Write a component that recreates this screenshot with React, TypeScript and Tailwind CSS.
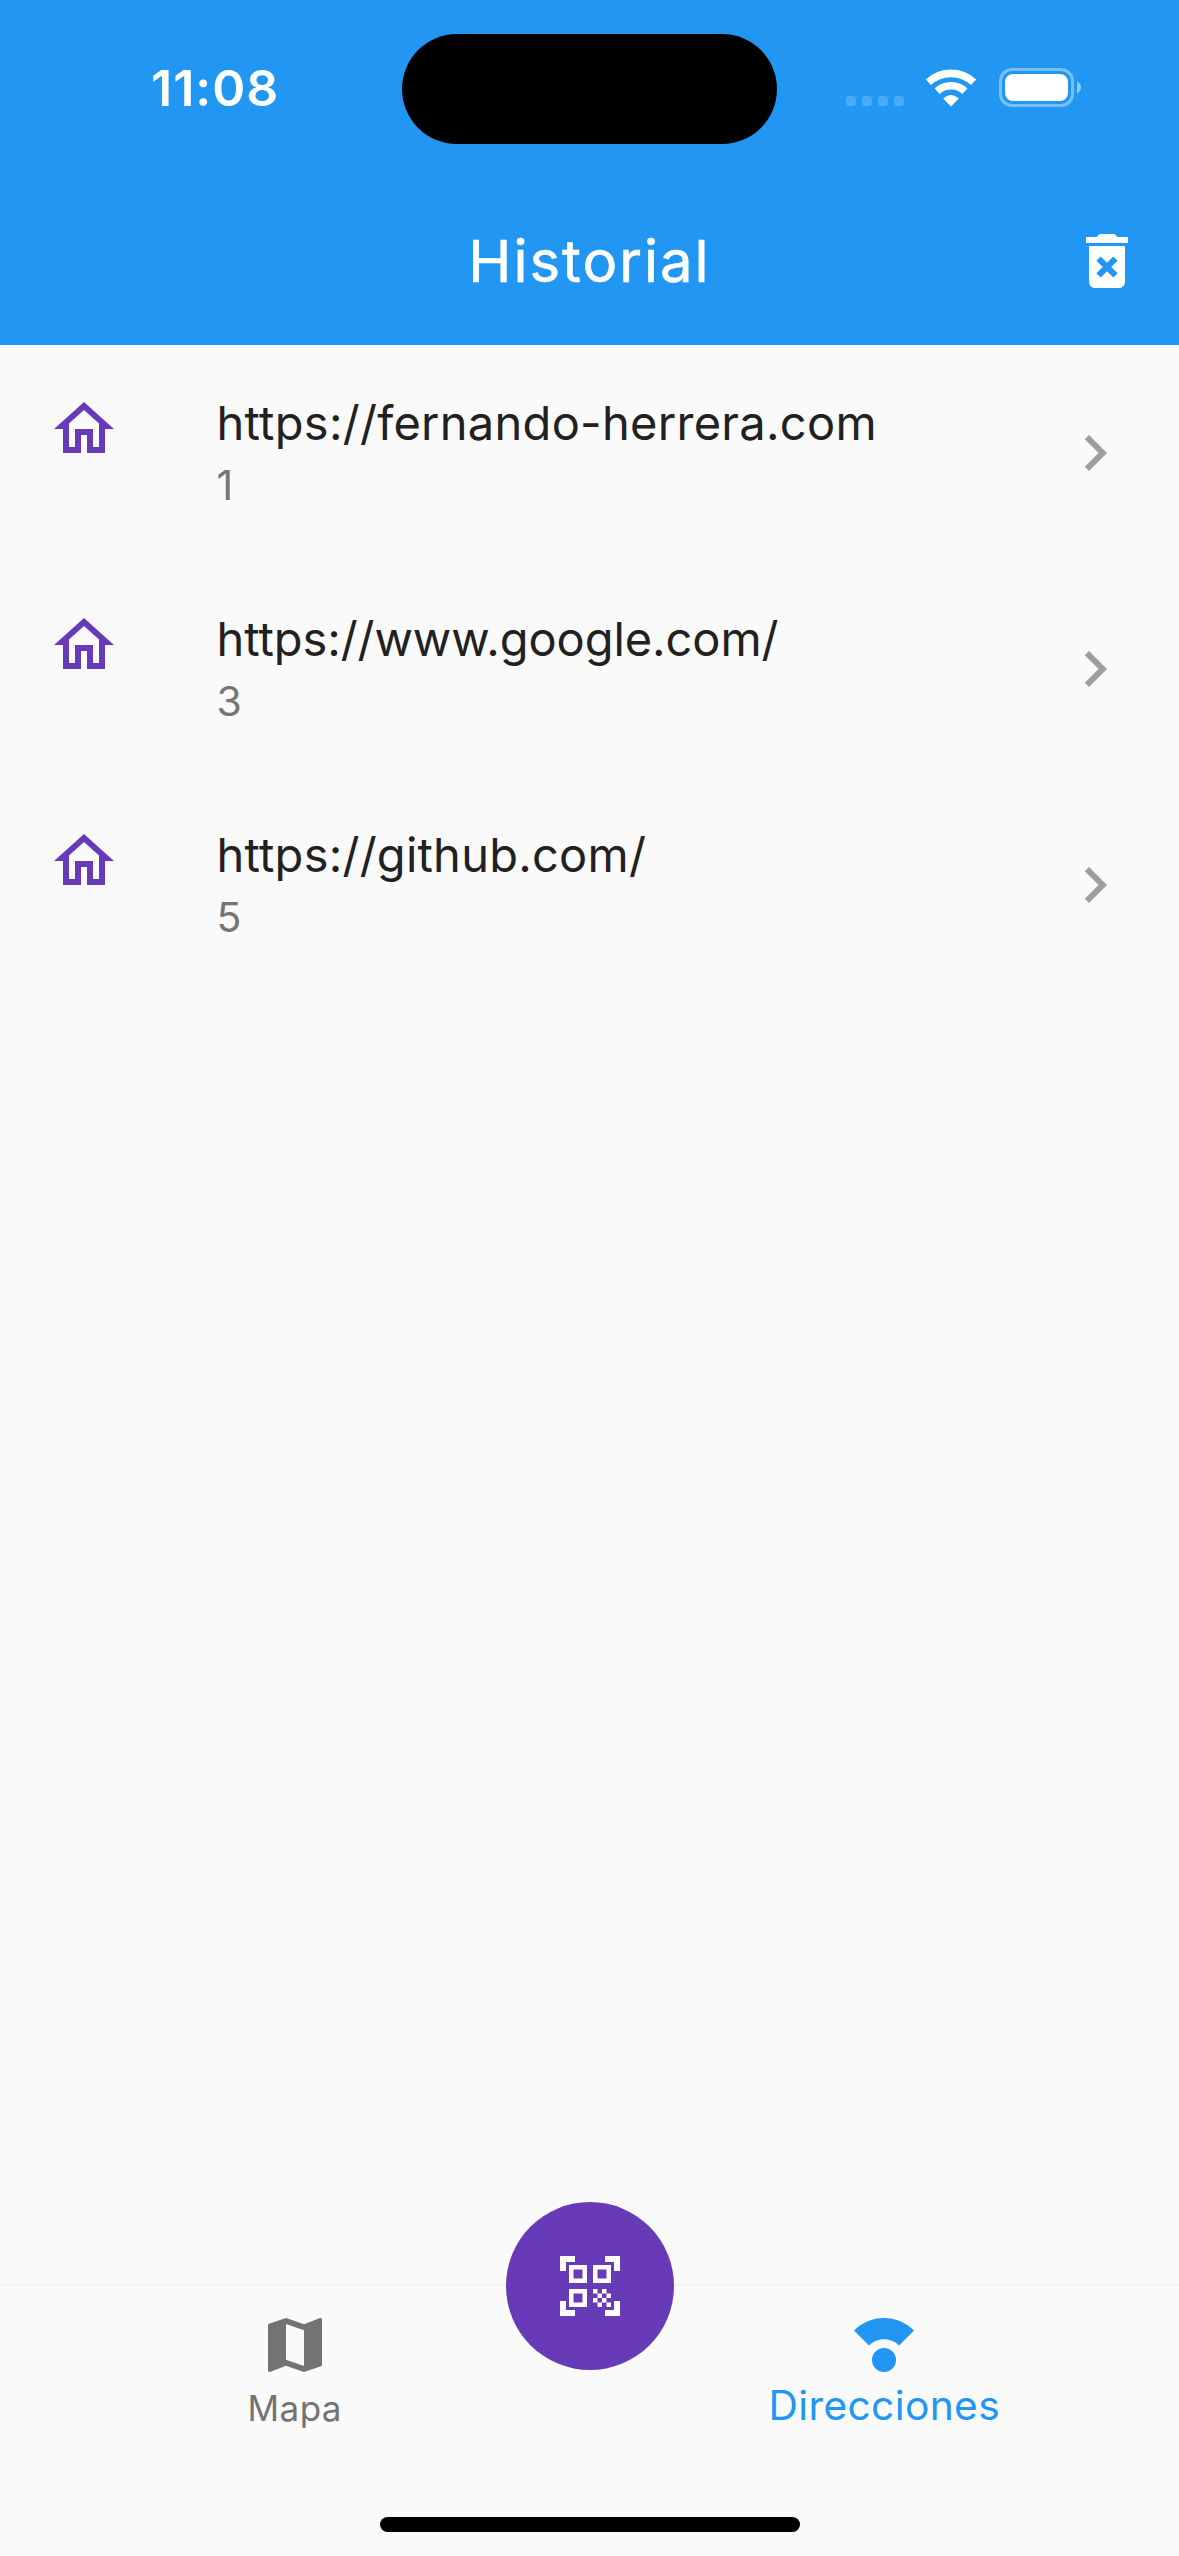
import type { ReactNode } from "react";

const history = [
  { url: "https://fernando-herrera.com", id: 1, tracking: "tracking-[0.28px]" },
  { url: "https://www.google.com/", id: 3, tracking: "tracking-[-0.06px]" },
  { url: "https://github.com/", id: 5, tracking: "tracking-[0.24px]" },
];

function Icon({ d, className }: { d: string; className?: string }) {
  return (
    <svg viewBox="0 0 24 24" fill="currentColor" className={`size-[72px] shrink-0 ${className ?? ""}`}>
      <path d={d} />
    </svg>
  );
}

const paths = {
  trash:
    "M6 19c0 1.1.9 2 2 2h8c1.1 0 2-.9 2-2V7H6v12zm2.46-7.12 1.41-1.41L12 12.59l2.12-2.12 1.41 1.41L13.41 14l2.12 2.12-1.41 1.41L12 15.41l-2.12 2.12-1.41-1.41L10.59 14l-2.13-2.12zM15.5 4l-1-1h-5l-1 1H5v2h14V4z",
  home: "M12 5.69l5 4.5V18h-2v-6H9v6H7v-7.81l5-4.5M12 3L2 12h3v8h6v-6h2v6h6v-8h3L12 3z",
  chevron: "M8.59 16.59 13.17 12 8.59 7.41 10 6l6 6-6 6z",
  scanner:
    "M9.5 6.5v3h-3v-3h3M11 5H5v6h6V5zm-1.5 9.5v3h-3v-3h3M11 13H5v6h6v-6zm6.5-6.5v3h-3v-3h3M19 5h-6v6h6V5zm-6 8h1.5v1.5H13V13zm1.5 1.5H16V16h-1.5v-1.5zM16 13h1.5v1.5H16V13zm-3 3h1.5v1.5H13V16zm1.5 1.5H16V19h-1.5v-1.5zM16 16h1.5v1.5H16V16zm1.5-1.5H19V16h-1.5v-1.5zm0 3H19V19h-1.5v-1.5zM22 7h-2V4h-3V2h5v5zm0 15v-5h-2v3h-3v2h5zM2 22h5v-2H4v-3H2v5zM2 2v5h2V4h3V2H2z",
  map: "M20.5 3l-.16.03L15 5.1 9 3 3.36 4.9c-.21.07-.36.25-.36.48V20.5c0 .28.22.5.5.5l.16-.03L9 18.9l6 2.1 5.64-1.9c.21-.07.36-.25.36-.48V3.5c0-.28-.22-.5-.5-.5zM15 19l-6-2.11V5l6 2.11V19z",
  compass:
    "M12 10.07c1.95 0 3.72.79 5 2.07l5-5C19.44 4.59 15.9 3 12 3S4.56 4.59 2 7.15l5 5c1.28-1.28 3.05-2.08 5-2.08zM12 13a4 4 0 1 0 0 8 4 4 0 0 0 0-8z",
};

function StatusBar() {
  return (
    <div className="flex h-[177px] items-start">
      <div className="w-[402px] pt-[58px] pl-[151px] text-[50px] leading-[60px] font-semibold tracking-[1px]">
        11:08
      </div>
      <div className="mt-[33.5px] h-[110.5px] w-[375px] rounded-full bg-black" />
      <div className="ml-[69px] flex h-[177px] gap-[6px] pt-[96px]">
        {[0, 1, 2, 3].map((n) => (
          <div key={n} className="size-[10px] rounded-[3px] bg-white/20" />
        ))}
      </div>
      {/* Wi-Fi signal */}
      <svg width="52" height="38" viewBox="0 0 52 38" className="mt-[68.5px] ml-[21px]">
        <g fill="none" stroke="#fff">
          <path d="M3.4 13.3A33 33 0 0 1 48.6 13.3" strokeWidth="7.6" />
          <path d="M12.1 22.2A20.5 20.5 0 0 1 39.9 22.2" strokeWidth="7.4" />
        </g>
        <path d="M26 37.6 18.6 30.1Q18.2 29.5 18.8 29Q26 22.8 33.2 29Q33.8 29.5 33.4 30.1Z" fill="#fff" />
      </svg>
      {/* Battery */}
      <svg width="84" height="40" viewBox="0 0 84 40" className="mt-[67px] ml-[21px]">
        <rect x="2.5" y="2.5" width="72" height="36" rx="11.5" fill="none" stroke="#fff" strokeOpacity=".4" strokeWidth="3" />
        <rect x="7" y="7" width="63" height="27" rx="8" fill="#fff" />
        <path d="M79 14.3Q83 16.3 83 20.3T79 26.5Z" fill="#fff" fillOpacity=".5" />
      </svg>
    </div>
  );
}

function NavItem({ icon, children, className }: { icon: string; children: ReactNode; className: string }) {
  return (
    <div className={`flex flex-1 flex-col items-center ${className}`}>
      <Icon d={icon} />
      {children}
    </div>
  );
}

export default function App() {
  return (
    <div className="flex h-[2556px] w-[1179px] flex-col overflow-hidden bg-[#fafafa] font-['Inter',sans-serif]">
      <header className="h-[345px] shrink-0 bg-[#2196f3] text-white">
        <StatusBar />
        <div className="grid h-[168px] grid-cols-[144px_1fr_144px] items-center">
          <h1 className="col-start-2 text-center text-[58px] leading-[70px] font-normal tracking-[2px] [-webkit-text-stroke:0.6px_white]">
            Historial
          </h1>
          <button className="flex justify-end pr-[36px]" aria-label="Borrar historial">
            <Icon d={paths.trash} />
          </button>
        </div>
      </header>

      <main className="flex-1">
        {history.map((item) => (
          <div key={item.id} className="flex h-[216px] items-start px-[48px] pt-[48px]">
            <Icon d={paths.home} className="text-[#673ab7]" />
            <div className="mt-[2px] ml-[96.5px] flex-1">
              <div className={`text-[47px] leading-[56px] text-[#212121] ${item.tracking}`}>{item.url}</div>
              <div className="mt-[10px] text-[41px] leading-[48px] text-[#757575]">{item.id}</div>
            </div>
            <Icon d={paths.chevron} className="mt-[24px] text-[#9e9e9e]" />
          </div>
        ))}
      </main>

      <footer className="relative flex h-[270px] shrink-0 flex-col shadow-[0_-2px_2px_rgba(0,0,0,0.03)]">
        <nav className="flex flex-1 bg-[#fafafa] pt-[23px]">
          <NavItem icon={paths.map} className="text-[#737373]">
            <span className="mt-[5px] text-[35px] leading-[44px] tracking-[0.4px]">Mapa</span>
          </NavItem>
          <NavItem icon={paths.compass} className="text-[#2196f3]">
            <span className="mt-px text-[40.7px] leading-[48px] tracking-[0.36px]">Direcciones</span>
          </NavItem>
        </nav>
        <div className="mb-[24px] h-[15px] w-[420px] self-center rounded-full bg-black" />
        <button
          aria-label="Escanear"
          className="absolute -top-[84px] left-[505.5px] flex size-[168px] items-center justify-center rounded-full bg-[#673ab7] text-white"
        >
          <Icon d={paths.scanner} />
        </button>
      </footer>
    </div>
  );
}
